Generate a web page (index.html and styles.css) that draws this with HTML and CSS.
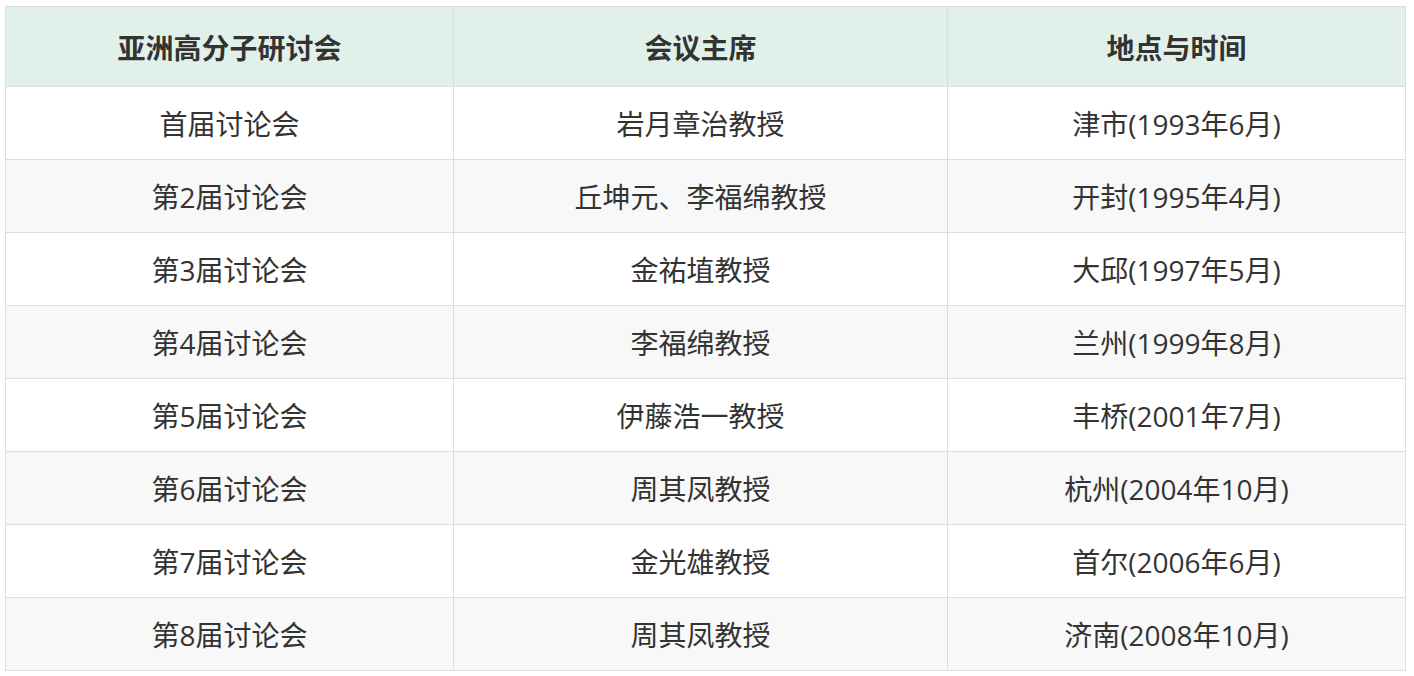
FILE: index.html
```html
<!DOCTYPE html>
<html lang="zh-CN">
<head>
<meta charset="utf-8">
<title>亚洲高分子研讨会</title>
<link rel="stylesheet" href="styles.css">
</head>
<body>
<table class="conf-table">
  <colgroup>
    <col class="col-a">
    <col class="col-b">
    <col class="col-c">
  </colgroup>
  <thead>
    <tr><th>亚洲高分子研讨会</th><th>会议主席</th><th>地点与时间</th></tr>
  </thead>
  <tbody>
    <tr><td>首届讨论会</td><td>岩月章治教授</td><td>津市(1993年6月)</td></tr>
    <tr><td>第2届讨论会</td><td>丘坤元、李福绵教授</td><td>开封(1995年4月)</td></tr>
    <tr><td>第3届讨论会</td><td>金祐埴教授</td><td>大邱(1997年5月)</td></tr>
    <tr><td>第4届讨论会</td><td>李福绵教授</td><td>兰州(1999年8月)</td></tr>
    <tr><td>第5届讨论会</td><td>伊藤浩一教授</td><td>丰桥(2001年7月)</td></tr>
    <tr><td>第6届讨论会</td><td>周其凤教授</td><td>杭州(2004年10月)</td></tr>
    <tr><td>第7届讨论会</td><td>金光雄教授</td><td>首尔(2006年6月)</td></tr>
    <tr><td>第8届讨论会</td><td>周其凤教授</td><td>济南(2008年10月)</td></tr>
  </tbody>
</table>
</body>
</html>
```
FILE: styles.css
```css
html, body {
  margin: 0;
  padding: 0;
  background: #ffffff;
}
body {
  padding: 6px 0 0 5px;
  font-family: "Open Sans", "Noto Sans CJK SC", sans-serif;
  color: #333333;
}
.conf-table {
  border-collapse: collapse;
  width: 1400px;
  table-layout: fixed;
  font-size: 28px;
}
.col-a { width: 448px; }
.col-b { width: 494px; }
.col-c { width: 458px; }
.conf-table th,
.conf-table td {
  border: 1px solid #dddddd;
  text-align: center;
  vertical-align: middle;
  line-height: 36px;
  padding: 2px 8px 0;
}
.conf-table th {
  background: #e1f1ea;
  font-weight: 700;
  height: 77px;
}
.conf-table td {
  height: 70px;
  font-weight: 400;
}
.conf-table tbody tr:nth-child(even) td {
  background: #f8f8f8;
}
```
